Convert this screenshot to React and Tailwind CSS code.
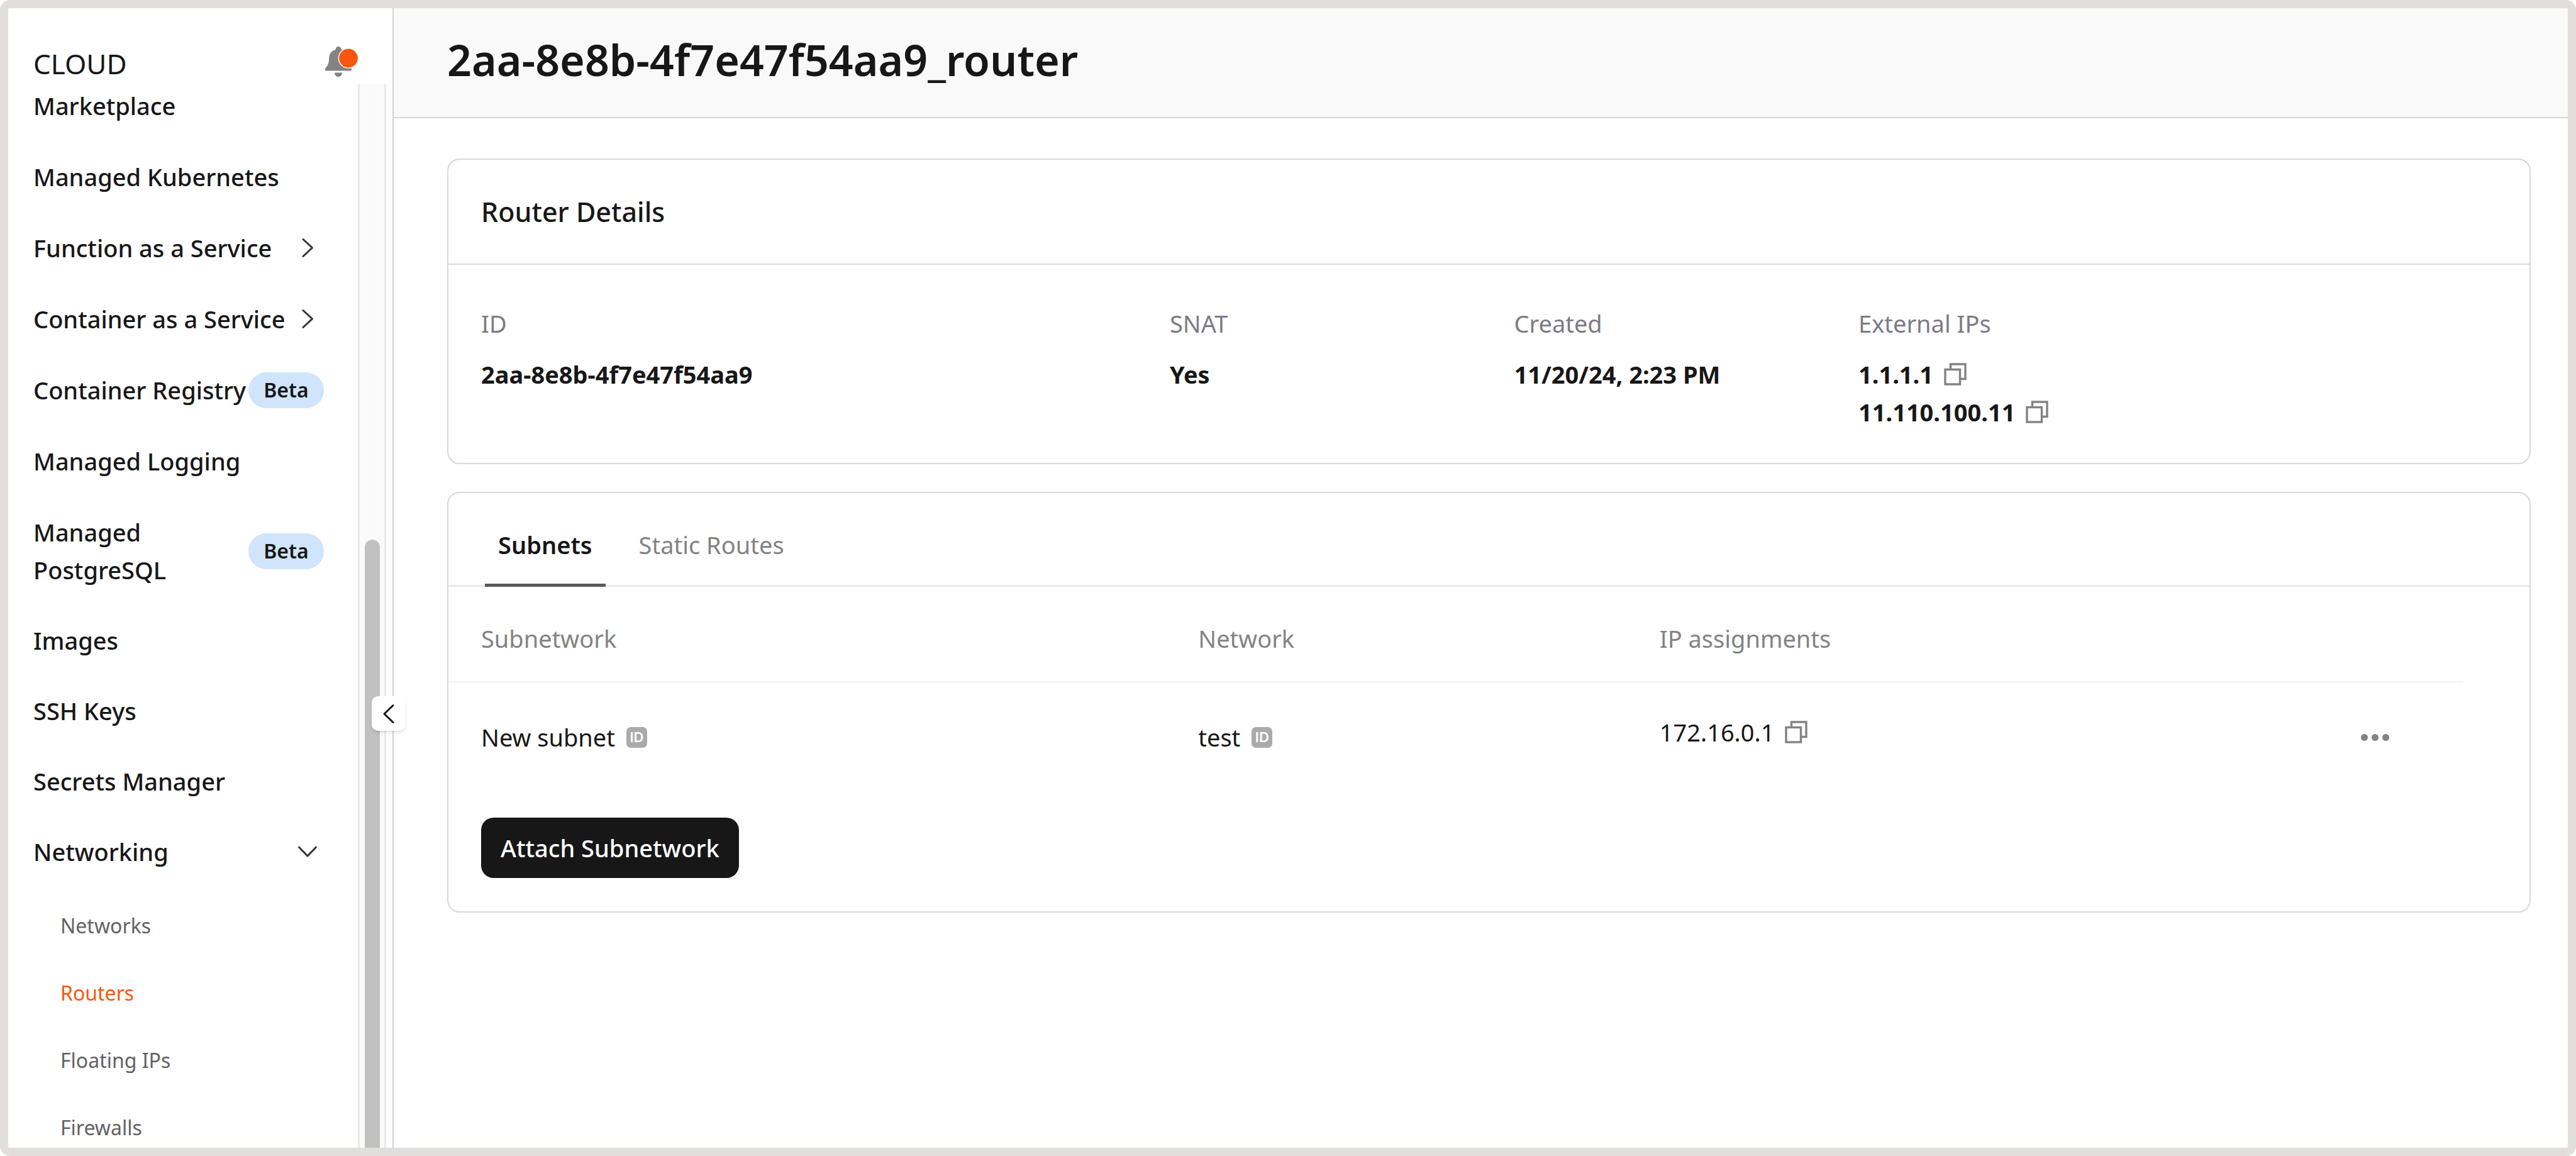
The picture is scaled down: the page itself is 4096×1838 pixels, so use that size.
const strokeProps = {
  fill: 'none',
  stroke: 'currentColor',
  strokeWidth: 3,
  strokeLinecap: 'round',
  strokeLinejoin: 'round',
};

function ChevronRight() {
  return (
    <svg viewBox="0 0 32 32" className="mr-[10px] size-8 shrink-0 text-[#333333]" aria-hidden="true">
      <path d="M9 2.5 L23.5 16 L9 29.5" {...strokeProps} />
    </svg>
  );
}

function ChevronDown() {
  return (
    <svg viewBox="0 0 32 32" className="mr-[10px] size-8 shrink-0 text-[#333333]" aria-hidden="true">
      <path d="M2.5 9 L16 23 L29.5 9" {...strokeProps} />
    </svg>
  );
}

function Bell() {
  return (
    <svg viewBox="0 0 60 50" className="h-[50px] w-[60px]" aria-hidden="true">
      <path
        fill="#838383"
        d="M22 1 C24.6 1 26.3 2.8 26.2 5.4 C32 7.4 36 12.4 36.2 18.6 C36.5 27 37.4 31 42 35 C44 37 43.2 39.6 40.6 39.6 L3.2 39.6 C0.6 39.6 0 37 1.8 35 C6 31 7 27 7.3 18.6 C7.6 12.4 11.6 7.4 18 5.4 C17.8 2.8 19.4 1 22 1 Z"
      />
      <path fill="#838383" d="M16 42.4 H28 C28 46 25.6 49 22 49 C18.4 49 16 46 16 42.4 Z" />
      <circle cx="38" cy="19.5" r="15.6" fill="#fa560f" stroke="#ffffff" strokeWidth="1.4" />
    </svg>
  );
}

function CopyButton({ label }) {
  return (
    <button type="button" aria-label={label} className="flex shrink-0">
      <svg viewBox="0 0 36 36" className="size-9" fill="none" stroke="#838383" strokeWidth="3.4" aria-hidden="true">
        <path d="M10.5 10 V2 H34 V25.5 H26" />
        <rect x="2" y="10.5" width="23.5" height="23.5" />
      </svg>
    </button>
  );
}

function IdBadge() {
  return (
    <button
      type="button"
      className="flex h-[33px] w-[33px] shrink-0 items-center justify-center rounded-[7px] bg-[#aaaaaa] font-['Inter',sans-serif] text-[22px] leading-none font-semibold text-white"
    >
      ID
    </button>
  );
}

function Beta() {
  return (
    <span className="flex h-[57px] w-[120px] shrink-0 items-center justify-center rounded-full bg-[#d0e4fc] text-[32px] leading-none font-semibold">
      Beta
    </span>
  );
}

function NavItem({ label, badge, trail }) {
  return (
    <li>
      <a href="#" className="flex items-center justify-between">
        <span>{label}</span>
        {badge && <Beta />}
        {trail}
      </a>
    </li>
  );
}

function Sidebar() {
  return (
    <aside className="relative flex w-[613px] shrink-0 flex-col border-r-2 border-[#d2d2d6] bg-white">
      <div className="flex h-[121px] shrink-0 items-start justify-between pr-[48px] pl-[40px]">
        <span className="pt-[56px] text-[44px] leading-[64px]">CLOUD</span>
        <button type="button" aria-label="Notifications" className="pt-[60px]">
          <Bell />
        </button>
      </div>
      <div className="flex min-h-0 flex-1 pr-[10px]">
        <nav className="min-w-0 flex-1 overflow-hidden pt-[4px] pr-[54px] pl-[40px] leading-[60px] font-medium">
          <ul className="flex flex-col gap-[53px]">
            <NavItem label="Marketplace" />
            <NavItem label="Managed Kubernetes" />
            <NavItem label="Function as a Service" trail={<ChevronRight />} />
            <NavItem label="Container as a Service" trail={<ChevronRight />} />
            <NavItem label="Container Registry" badge />
            <NavItem label="Managed Logging" />
            <NavItem label="Managed PostgreSQL" badge />
          </ul>
          <ul className="mt-[52px] flex flex-col gap-[52px]">
            <NavItem label="Images" />
            <NavItem label="SSH Keys" />
            <NavItem label="Secrets Manager" />
            <NavItem label="Networking" trail={<ChevronDown />} />
          </ul>
          <ul className="mt-[61px] flex flex-col gap-[53px] pl-[43px] text-[32px] leading-[54px] font-normal text-[#626262]">
            <li><a href="#">Networks</a></li>
            <li><a href="#" aria-current="page" className="text-[#fa560f]">Routers</a></li>
            <li><a href="#">Floating IPs</a></li>
            <li><a href="#">Firewalls</a></li>
          </ul>
        </nav>
        <div className="flex w-[45px] shrink-0 flex-col items-center border-x-[3px] border-[#ebebeb] bg-[#fafafa]">
          <div className="mt-[724px] w-6 flex-1 rounded-t-full bg-[#c1c1c1]" />
        </div>
      </div>
      <button
        type="button"
        aria-label="Collapse menu"
        className="absolute top-[1094px] -right-[21px] flex h-[55px] w-[54px] items-center justify-center rounded-[10px] bg-white shadow-md"
      >
        <svg viewBox="0 0 32 32" className="size-8 text-[#171717]" aria-hidden="true">
          <path d="M23 2.5 L9 16 L23 29.5" {...strokeProps} />
        </svg>
      </button>
    </aside>
  );
}

function Detail({ label, children, className }) {
  return (
    <div className={className}>
      <dt className="text-[#7d7a85]">{label}</dt>
      <dd className="mt-[21px] font-bold">{children}</dd>
    </div>
  );
}

function Ip({ address }) {
  return (
    <div className="flex items-center gap-[17px]">
      <span>{address}</span>
      <CopyButton label={`Copy ${address}`} />
    </div>
  );
}

export default function App() {
  return (
    <div className="flex h-screen overflow-hidden rounded-[16px] border-[13px] border-[#e2dedd] bg-white font-['Noto_Sans',sans-serif] text-[38px] leading-[60px] text-[#171717]">
      <Sidebar />
      <main className="min-w-0 flex-1">
        <header className="border-b-2 border-[#d8d8dc] bg-[#f9f9f9] pt-[34px] pr-[59px] pb-[43px] pl-[85px]">
          <h1 className="text-[68px] leading-[96px] font-semibold">2aa-8e8b-4f7e47f54aa9_router</h1>
        </header>
        <div className="flex flex-col gap-[44px] pt-[64px] pr-[59px] pl-[85px]">
          <section className="rounded-[20px] border-2 border-[#d8d8dc]">
            <h2 className="border-b-2 border-[#d8d8dc] px-[52px] py-[50px] text-[43px] leading-[65px] font-medium">
              Router Details
            </h2>
            <dl className="grid grid-cols-6 gap-x-20 px-[52px] pt-[63px] pb-[51px]">
              <Detail label="ID" className="col-span-2">2aa-8e8b-4f7e47f54aa9</Detail>
              <Detail label="SNAT">Yes</Detail>
              <Detail label="Created">11/20/24, 2:23 PM</Detail>
              <Detail label="External IPs" className="col-span-2">
                <Ip address="1.1.1.1" />
                <Ip address="11.110.100.11" />
              </Detail>
            </dl>
          </section>

          <section className="rounded-[20px] border-2 border-[#d8d8dc] pb-[53px]">
            <div role="tablist" className="flex gap-8 border-b-[3px] border-[#e9e9e9] px-[58px] pt-[52px]">
              <button
                type="button"
                role="tab"
                aria-selected="true"
                className="-mb-[3px] border-b-[5px] border-[#5a5a5a] px-[21px] pb-[32px] font-semibold"
              >
                Subnets
              </button>
              <button
                type="button"
                role="tab"
                aria-selected="false"
                className="-mb-[3px] border-b-[5px] border-transparent px-[21px] pb-[32px] text-[#838383]"
              >
                Static Routes
              </button>
            </div>
            <div className="pr-[106px]">
              <table className="w-full table-fixed border-collapse text-left">
                <thead>
                  <tr className="border-b-[3px] border-[#f4f4f4] text-[#838383]">
                    <th scope="col" className="w-[35.6%] pt-[52px] pb-[38px] pl-[52px] font-normal">Subnetwork</th>
                    <th scope="col" className="w-[22.9%] pt-[52px] pb-[38px] pl-[52px] font-normal">Network</th>
                    <th scope="col" className="pt-[52px] pb-[38px] pl-[52px] font-normal">IP assignments</th>
                    <td className="w-[280px]" />
                  </tr>
                </thead>
                <tbody>
                  <tr className="align-top">
                    <td className="pt-[56px] pl-[52px]">
                      <div className="flex items-center gap-[18px]">
                        New subnet <IdBadge />
                      </div>
                    </td>
                    <td className="pt-[56px] pl-[52px]">
                      <div className="flex items-center gap-[18px]">
                        test <IdBadge />
                      </div>
                    </td>
                    <td className="pt-[48px] pl-[52px]">
                      <Ip address="172.16.0.1" />
                    </td>
                    <td className="pt-[56px]">
                      <button type="button" aria-label="Row actions" className="mx-auto flex h-[60px] items-center gap-[6px]">
                        <span className="size-[11px] rounded-full bg-[#838383]" />
                        <span className="size-[11px] rounded-full bg-[#838383]" />
                        <span className="size-[11px] rounded-full bg-[#838383]" />
                      </button>
                    </td>
                  </tr>
                </tbody>
              </table>
            </div>
            <button
              type="button"
              className="mt-[98px] ml-[52px] rounded-[20px] bg-[#171717] px-[31px] py-[18px] font-medium text-white"
            >
              Attach Subnetwork
            </button>
          </section>
        </div>
      </main>
    </div>
  );
}
